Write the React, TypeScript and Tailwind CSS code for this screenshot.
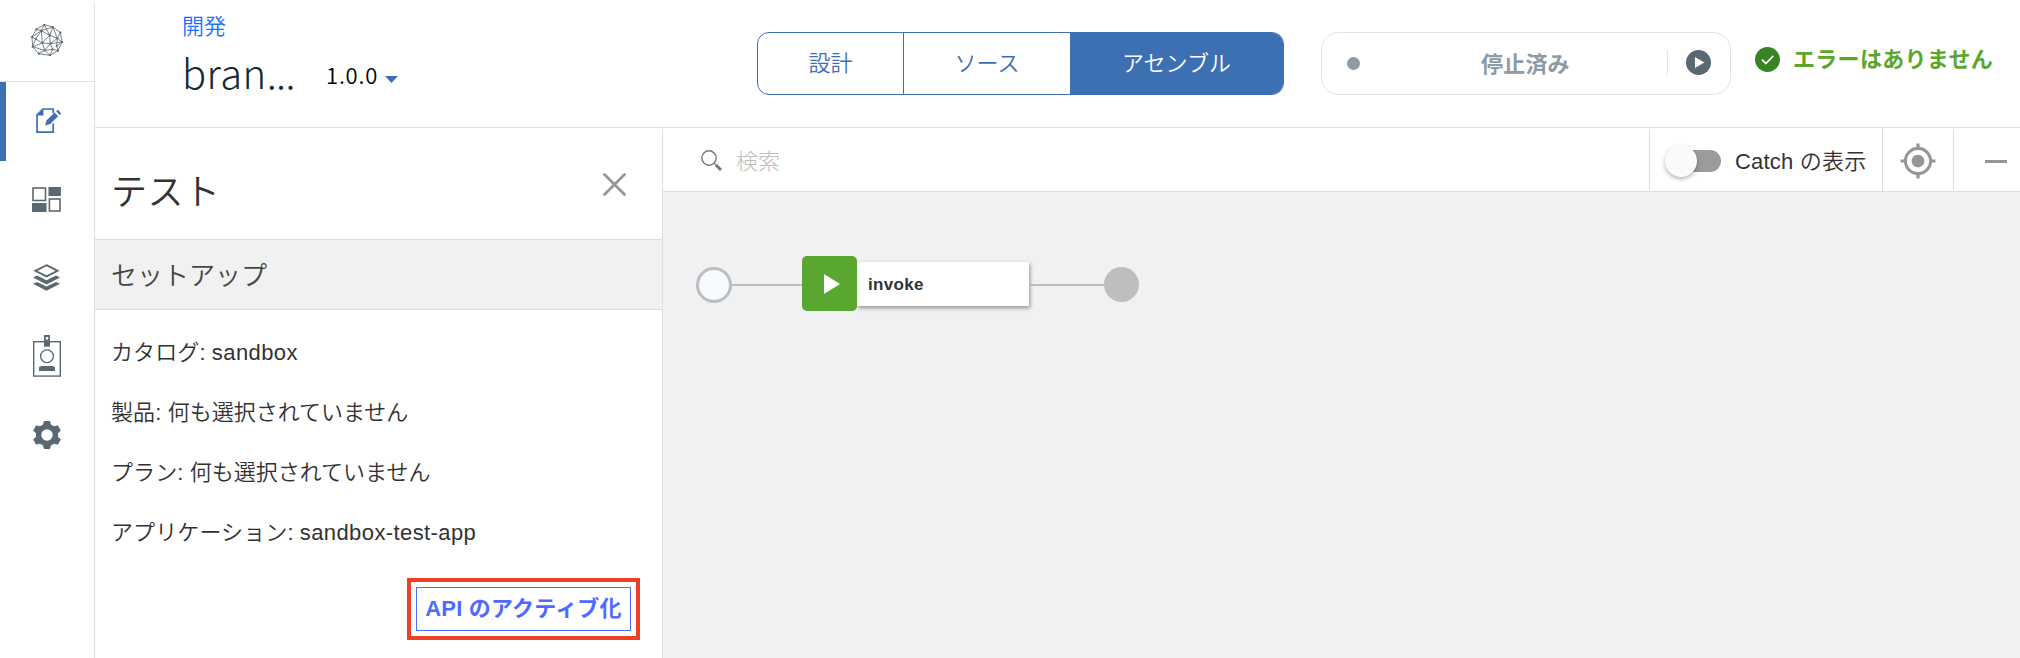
import React from "react";
import { MdMyLocation } from "react-icons/md";

const nodes: [number, number][] = [
  [133, 74], [159, 81], [181, 98], [186, 126], [174, 152], [150, 166], [116, 161], [98, 140], [96, 111], [109, 88],
  [124, 92], [149, 106], [172, 115], [151, 131], [127, 129], [107, 117], [134, 151], [158, 148], [170, 138],
];
const links: [number, number][] = [
  [0, 1], [1, 2], [2, 3], [3, 4], [4, 5], [5, 6], [6, 7], [7, 8], [8, 9], [9, 0],
  [10, 0], [10, 9], [10, 8], [10, 11], [10, 14], [10, 1], [11, 1], [11, 0], [11, 12], [11, 14], [11, 13],
  [12, 1], [12, 2], [12, 3], [12, 13], [13, 14], [13, 16], [13, 17], [13, 3], [14, 15], [14, 7], [14, 16],
  [15, 8], [15, 7], [15, 10], [16, 7], [16, 6], [16, 5], [17, 5], [17, 4], [17, 16], [18, 3], [18, 4], [18, 12],
];

function GlobeIcon() {
  return (
    <svg className="size-8" viewBox="93 72 96 96" stroke="#5a6872" fill="#5a6872">
      {links.map(([a, b]) => (
        <line key={`${a}-${b}`} x1={nodes[a][0]} y1={nodes[a][1]} x2={nodes[b][0]} y2={nodes[b][1]} strokeWidth="2.7" opacity=".9" />
      ))}
      {nodes.map(([x, y]) => (
        <circle key={`${x}-${y}`} cx={x} cy={y} r="3.2" stroke="none" />
      ))}
    </svg>
  );
}

function EditIcon() {
  return (
    <svg className="h-[26px] w-[26px]" viewBox="0 0 26 26" fill="#3d70b2">
      <path d="M17.2 5.2V1H7L1 7v17.2h16.2V15.4" fill="none" stroke="#3d70b2" strokeWidth="1.7" />
      <path d="M7.5 0v7.5H0z" />
      <path d="M9 17.6l1.7-5.4 8-7.6 3.4 3.6-7.9 7.8z" />
      <path d="M20.2 3.3l1.6-1.5 3.4 3.5-1.5 1.6z" />
    </svg>
  );
}

function DashboardIcon() {
  return (
    <svg className="h-[25px] w-[29px]" viewBox="0 0 29 25" fill="#5a6872">
      <rect x="1" y="1" width="12.5" height="12.5" fill="none" stroke="#5a6872" strokeWidth="1.6" />
      <rect x="16.5" y="0" width="12.4" height="9" />
      <rect x="0" y="16" width="14.5" height="9" />
      <rect x="17.4" y="12" width="10.6" height="12" fill="none" stroke="#5a6872" strokeWidth="1.6" />
    </svg>
  );
}

function LayersIcon() {
  return (
    <svg className="h-[27px] w-[27px]" viewBox="0 0 27 27" fill="#5a6872">
      <path d="M13.5 1.2L24.6 6.8 13.5 12.4 2.4 6.8z" fill="none" stroke="#5a6872" strokeWidth="1.9" />
      <path d="M0 13.4l4-1.8 9.5 4.6 9.5-4.6 4 1.8-13.5 7z" />
      <path d="M0 19.8l4-1.8 9.5 4.6L23 18l4 1.8-13.5 7z" />
    </svg>
  );
}

function BadgeIcon() {
  return (
    <svg className="h-[42px] w-[28px]" viewBox="0 0 28 42" fill="#5a6872">
      <rect x=".7" y="6.7" width="26.6" height="34.4" fill="none" stroke="#5a6872" strokeWidth="1.4" />
      <path d="M11 0h6v11.7h-6z" />
      <rect x="12.8" y="2" width="2.4" height="2.6" fill="#fff" />
      <circle cx="14" cy="21.3" r="6.4" fill="none" stroke="#5a6872" strokeWidth="1.3" />
      <path d="M6 36v-2.6q0-2.4 3-2.4h10q3 0 3 2.4V36z" />
    </svg>
  );
}

function GearIcon() {
  return (
    <svg className="size-[28px]" viewBox="-14 -14 28 28" fill="#5a6872">
      <circle r="8.4" fill="none" stroke="#5a6872" strokeWidth="5.4" />
      {[0, 60, 120, 180, 240, 300].map((a) => (
        <path key={a} transform={`rotate(${a})`} d="M-4.6-8l1.6-6.2h6l1.6 6.2z" />
      ))}
    </svg>
  );
}

function Sidebar() {
  return (
    <nav className="flex w-[95px] shrink-0 flex-col pt-[3px]">
      <div className="flex h-[79px] items-center justify-center border-r border-b border-[#dfe3e6] pt-[6px] pb-2.5">
        <GlobeIcon />
      </div>
      <div className="flex flex-1 flex-col border-r border-[#dcdee0]">
        <div className="flex h-[79px] items-center border-l-[6px] border-[#3d70b2] pb-0.5 pl-[30px]">
          <EditIcon />
        </div>
        <div className="flex h-[77px] items-center justify-center pr-px">
          <DashboardIcon />
        </div>
        <div className="flex h-[79px] items-center justify-center pr-px">
          <LayersIcon />
        </div>
        <div className="flex h-[78px] items-center justify-center pr-px">
          <BadgeIcon />
        </div>
        <div className="flex h-[80px] items-center justify-center pr-px">
          <GearIcon />
        </div>
      </div>
    </nav>
  );
}

function Header() {
  return (
    <header className="flex h-[128px] shrink-0 border-b border-[#dfe1e3]">
      <div className="w-[662px] pt-2 pl-[87px]">
        <a className="block h-[33px] text-[22px] leading-[33px] text-[#1f70ff]">開発</a>
        <div className="flex">
          <h1 className="w-[144px] text-[40px] leading-[62px] font-light text-[#152935]">
            <span className="tracking-[0.4px]">bran</span>
            <span className="tracking-[-0.6px]">...</span>
          </h1>
          <div className="flex h-[65px] items-center gap-[7px] text-[22px] leading-[30px] text-black">
            <span className="tracking-[0.8px]">1.0.0</span>
            <svg className="mt-3 h-[7px] w-[13px]" viewBox="0 0 13 7" fill="#3d70b2">
              <path d="M0 0h13L6.5 7z" />
            </svg>
          </div>
        </div>
      </div>
      <div className="mt-8 flex h-[63px] w-[527px] overflow-hidden rounded-xl border border-[#3d70b2] text-[22px] leading-[56px] text-[#3d70b2]">
        <button className="w-[146px] border-r border-[#3d70b2] pb-[5px]">設計</button>
        <button className="w-[166px] pb-[5px]">ソース</button>
        <button className="flex-1 bg-[#3d70b2] pb-[5px] text-white">アセンブル</button>
      </div>
      <div className="mt-8 ml-[37px] flex h-[63px] w-[410px] items-center rounded-[18px] border border-[#dfe3e6]">
        <span className="ml-[25px] size-[13px] rounded-full bg-[#8c9ba5]" />
        <span className="mb-[4px] ml-[121px] w-[186px] text-[22px] leading-8 font-bold tracking-[0.2px] text-[#8c9ba5]">停止済み</span>
        <span className="h-[25px] w-px -translate-y-px bg-[#dfe3e6]" />
        <svg className="ml-[18px] size-[25px] -translate-y-px" viewBox="0 0 25 25">
          <circle cx="12.5" cy="12.5" r="12.5" fill="#5a6872" />
          <path d="M9 7l9.3 5.5L9 18z" fill="#fff" />
        </svg>
      </div>
      <div className="mt-[43px] ml-[24px] flex h-8 items-center gap-[13px]">
        <svg className="size-[25px]" viewBox="0 0 25 25">
          <circle cx="12.5" cy="12.5" r="12.5" fill="#388324" />
          <path d="M7 12.7l3.8 3.8 7.5-7.6" fill="none" stroke="#fff" strokeWidth="1.7" />
        </svg>
        <span className="mb-[5px] text-[22px] leading-8 font-bold tracking-[0.3px] whitespace-nowrap text-[#5aa72b]">エラーはありません</span>
      </div>
    </header>
  );
}

const settings = [
  { label: "カタログ", value: "sandbox", latin: true },
  { label: "製品", value: "何も選択されていません", latin: false },
  { label: "プラン", value: "何も選択されていません", latin: false },
  { label: "アプリケーション", value: "sandbox-test-app", latin: true },
];

function TestPanel() {
  return (
    <aside className="mt-px flex w-[568px] shrink-0 flex-col border-r border-[#dcdee0] text-[#323232]">
      <div className="flex h-[111px] items-center justify-between border-b border-[#dcdcdc] pr-9 pl-4">
        <h2 className="pt-[9px] text-[36px] leading-[50px] tracking-[0.5px]">テスト</h2>
        <svg className="mt-px size-[23px]" viewBox="0 0 23 23" stroke="#969696" strokeWidth="2.8" strokeLinecap="round">
          <path d="M1.5 1.5l20 20M21.5 1.5l-20 20" />
        </svg>
      </div>
      <h3 className="h-[70px] border-b border-[#dcdcdc] bg-[#f1f1f1] pl-4 text-[26px] leading-[67px] text-[#464646]">セットアップ</h3>
      <div className="flex flex-col pt-[13px] pl-4">
        {settings.map((s) => (
          <p key={s.label} className="h-[60px] font-['Liberation_Sans','Noto_Sans_CJK_JP',sans-serif] text-[22px] leading-[60px]">
            <span className="tracking-[0.1px]">{s.label}: </span>
            <span className={s.latin ? "tracking-[0.4px]" : ""}>{s.value}</span>
          </p>
        ))}
      </div>
      <div className="mt-[15px] ml-[312px] flex h-[62px] w-[233px] border-4 border-[#ee4027] p-[5px]">
        <button className="flex-1 border border-[#4b6cff] font-['Liberation_Sans','Noto_Sans_CJK_JP',sans-serif] text-[22px] leading-[42px] font-bold tracking-[0.2px] whitespace-nowrap text-[#4b6cff]">
          API のアクティブ化
        </button>
      </div>
    </aside>
  );
}

function Toolbar() {
  return (
    <div className="flex h-[64px] shrink-0 border-b border-[#dcdee0] pt-px">
      <div className="flex flex-1 items-center pl-[38px]">
        <svg className="size-[21px]" viewBox="0 0 21 21" fill="none" stroke="#777">
          <circle cx="8" cy="8" r="7.2" strokeWidth="1.4" />
          <path d="M13 13l1.6 1.6" strokeWidth="1.2" />
          <path d="M14.8 14.8l5.2 5.2" strokeWidth="3" />
        </svg>
        <span className="mb-[3px] ml-[14px] text-[22px] leading-8 font-light text-[#bebebe]">検索</span>
      </div>
      <div className="flex w-[233px] items-center border-l border-[#dcdcdc] pl-[15px]">
        <div className="mt-0.5 flex h-[22px] w-[56px] items-center">
          <span className="z-10 size-8 shrink-0 rounded-full bg-[#fafafa] shadow-[0_2px_4px_rgba(0,0,0,0.3)]" />
          <span className="-ml-5 h-[22px] flex-1 rounded-full bg-[#9b9b9b]" />
        </div>
        <span className="mt-[3px] ml-[14px] font-['Liberation_Sans','Noto_Sans_CJK_JP',sans-serif] text-[22px] leading-8 tracking-[0.2px] whitespace-nowrap text-[#323232]">Catch の表示</span>
      </div>
      <div className="flex w-[71px] items-center justify-center border-l border-[#dcdcdc] pt-px">
        <MdMyLocation className="size-[38px] text-[#969696]" />
      </div>
      <div className="flex w-[67px] items-center border-l border-[#dcdcdc] pl-[31px]">
        <span className="mt-0.5 h-[3px] w-[22px] bg-[#969696]" />
      </div>
    </div>
  );
}

function Canvas() {
  return (
    <div className="flex flex-1 items-start bg-[#f0f1f3] pt-[64px] pl-[33px]">
      <div className="flex h-[55px] items-center">
        <span className="mt-0.5 size-[36px] rounded-full border-[3px] border-[#bebebe] bg-[#f7fbff]" />
        <span className="mt-0.5 h-0.5 w-[70px] bg-[#bebebe]" />
        <div className="z-10 flex size-[55px] items-center justify-center rounded-[5px] bg-[#5aa72f]">
          <svg className="ml-1 h-5 w-4" viewBox="0 0 16 20" fill="#fff">
            <path d="M0 0l16 10L0 20z" />
          </svg>
        </div>
        <div className="h-[44px] w-[172px] bg-white pl-[11px] font-['Liberation_Sans',sans-serif] text-[17px] leading-[45px] font-bold tracking-[0.3px] text-[#323232] shadow-[1px_2px_4px_rgba(0,0,0,0.4)]">
          invoke
        </div>
        <span className="mt-0.5 h-0.5 w-[75px] bg-[#bebebe]" />
        <span className="mt-0.5 size-[35px] rounded-full bg-[#bebebe]" />
      </div>
    </div>
  );
}

export default function App() {
  return (
    <div className="flex h-[658px] w-[2020px] overflow-hidden bg-white font-['Noto_Sans_CJK_JP',sans-serif] font-[350]">
      <Sidebar />
      <div className="flex min-w-0 flex-1 flex-col">
        <Header />
        <div className="flex min-h-0 flex-1">
          <TestPanel />
          <main className="flex min-w-0 flex-1 flex-col">
            <Toolbar />
            <Canvas />
          </main>
        </div>
      </div>
    </div>
  );
}
